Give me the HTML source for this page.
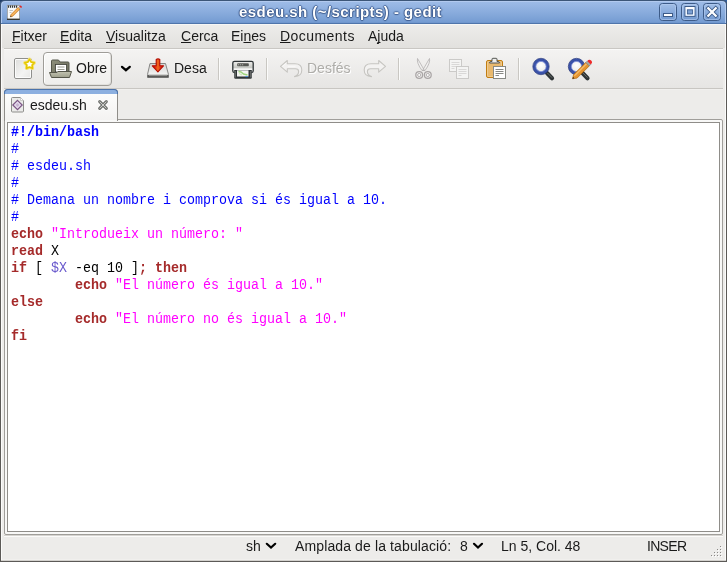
<!DOCTYPE html>
<html><head><meta charset="utf-8">
<style>
*{box-sizing:border-box;margin:0;padding:0}
html,body{width:727px;height:562px;overflow:hidden;background:#edecea}
body{position:relative;font-family:"Liberation Sans",sans-serif;font-size:14px;color:#000}
.abs{position:absolute}
.mi,.tb,.sb,#ttext,#code,.tl{will-change:transform}
#ttext{left:239px;top:3px;white-space:nowrap;color:#fff;font-weight:bold;font-size:15px;
 text-shadow:1px 0 1px rgba(45,75,125,0.75),-1px 0 1px rgba(45,75,125,0.75),0 1px 1px rgba(45,75,125,0.75),0 -1px 1px rgba(45,75,125,0.6);letter-spacing:0.45px}
.mi{top:28px;font-size:14px;color:#1a1a1a}
.mi u{text-decoration:underline;text-underline-offset:1px;text-decoration-thickness:1px;text-decoration-skip-ink:none}
.tb{position:absolute;top:60px;font-size:14px;color:#1a1a1a}
.sep{position:absolute;top:58px;width:2px;height:22px;border-left:1px solid #c9c7c2;border-right:1px solid #fbfbfa}
#code{left:11px;top:124px;font-family:"Liberation Mono",monospace;font-size:13.33px;line-height:15.0px;white-space:pre;color:#000;transform:scaleY(1.1333);transform-origin:0 0}
.cm{color:#0000ff}.kw{color:#a52a2a;font-weight:bold}.st{color:#ff00ff}.vr{color:#6a5acd}
.sb{position:absolute;top:538px;font-size:14px;color:#1a1a1a}
</style></head><body>
<div class="abs" style="left:0;top:24px;width:727px;height:538px;background:#5c5a57"></div>
<div class="abs" style="left:1px;top:24px;width:725px;height:537px;background:#fbfbfa"></div>
<div class="abs" style="left:2px;top:24px;width:723px;height:537px;background:#edecea"></div>
<div class="abs" style="left:2px;top:559px;width:723px;height:1px;background:#f1f0ee"></div>
<div class="abs" style="left:1px;top:560px;width:725px;height:1px;background:#d3d1cd"></div>
<svg class="abs" style="left:0;top:0" width="727" height="24" viewBox="0 0 727 24">
<defs><linearGradient id="gTitle" x1="0" y1="0" x2="0" y2="1"><stop offset="0" stop-color="#9dbbe7"/><stop offset="0.5" stop-color="#88abdc"/><stop offset="1" stop-color="#7199d0"/></linearGradient>
<linearGradient id="gBtn" x1="0" y1="0" x2="0" y2="1"><stop offset="0" stop-color="#a2bfe8"/><stop offset="1" stop-color="#7299d0"/></linearGradient></defs>
<rect x="0" y="0" width="8" height="8" fill="#1f3d6a"/>
<rect x="719" y="0" width="8" height="8" fill="#2f5e9e"/>
<path d="M0 24 V4.5 Q0 0 4.5 0 H722.5 Q727 0 727 4.5 V24 Z" fill="#3c5678"/>
<path d="M1 24 V5 Q1 1 5 1 H722 Q726 1 726 5 V24 Z" fill="#b2caef"/>
<path d="M2 24 V5.5 Q2 2 5.5 2 H721.5 Q725 2 725 5.5 V24 Z" fill="url(#gTitle)"/>
<rect x="0" y="23" width="727" height="1" fill="#4f75ab"/>
<rect x="2" y="22" width="723" height="1" fill="#7097ce"/>
<rect x="0" y="2" width="1" height="22" fill="#3c5678"/>
<rect x="726" y="2" width="1" height="22" fill="#3c5678"/>
<g>
<rect x="659.5" y="3.5" width="17" height="17" rx="3" fill="url(#gBtn)" stroke="#3d5b88"/>
<rect x="660.5" y="4.5" width="15" height="15" rx="2" fill="none" stroke="#b5cdf0" stroke-opacity="0.6"/>
<rect x="663.5" y="13.5" width="9" height="3" fill="#fff" stroke="#3d5b88" stroke-width="1"/>
<rect x="681.5" y="3.5" width="17" height="17" rx="3" fill="url(#gBtn)" stroke="#3d5b88"/>
<rect x="682.5" y="4.5" width="15" height="15" rx="2" fill="none" stroke="#b5cdf0" stroke-opacity="0.6"/>
<rect x="685" y="6.5" width="10" height="9.8" fill="none" stroke="#3d5b88" stroke-width="1"/>
<rect x="686.2" y="7.7" width="7.6" height="7.4" fill="#7a9fd3" stroke="#fff" stroke-width="1.3"/>
<rect x="685.8" y="7.3" width="8.4" height="2" fill="#fff"/>
<rect x="687.5" y="9.9" width="5" height="4" fill="none" stroke="#3d5b88" stroke-width="0.7"/>
<rect x="703.5" y="3.5" width="17" height="17" rx="3" fill="url(#gBtn)" stroke="#3d5b88"/>
<rect x="704.5" y="4.5" width="15" height="15" rx="2" fill="none" stroke="#b5cdf0" stroke-opacity="0.6"/>
<path d="M708.3 8.3 L715.7 15.7 M715.7 8.3 L708.3 15.7" stroke="#3d5b88" stroke-width="4" stroke-linecap="square"/>
<path d="M708.3 8.3 L715.7 15.7 M715.7 8.3 L708.3 15.7" stroke="#fff" stroke-width="2.3" stroke-linecap="square"/>
</g>
<!-- app icon -->
<rect x="7.3" y="5.3" width="12.2" height="14.2" fill="#fafaf8" stroke="#8f8f8a" stroke-width="0.7"/>
<rect x="7" y="18.6" width="12.8" height="1.4" fill="#35352f"/>
<path d="M8 6.6 h10" stroke="#2e3436" stroke-width="2.4" stroke-dasharray="1.2 0.8"/>
<path d="M9.5 10.5 h3.5 M9.5 12.5 h2" stroke="#aaa" stroke-width="0.7"/>
<path d="M10.3 17 L11 14.5 L18.2 7.3 L20 9.1 L12.8 16.3 Z" fill="#f0a040" stroke="#b86a10" stroke-width="0.5" stroke-linejoin="round"/>
<path d="M11.8 15.5 L18.9 8.4" stroke="#fbd38a" stroke-width="0.7"/>
<path d="M10.3 17 L10.7 15.6 L11.7 16.6 Z" fill="#222"/>
<path d="M18.2 7.3 L19.2 6.3 L21 8.1 L20 9.1 Z" fill="#b8b8b4"/>
<path d="M19.2 6.3 Q20.3 5 21.6 6.2 Q22.6 7.3 21 8.1 Z" fill="#e02424"/>
</svg>
<div class="abs" id="ttext">esdeu.sh (~/scripts) - gedit</div>

<div class="abs" style="left:2px;top:24px;width:723px;height:1px;background:#f6f6f5"></div>
<div class="abs" style="left:2px;top:25px;width:723px;height:23px;background:linear-gradient(#edecea,#e2e1de)"></div>
<div class="abs" style="left:4px;top:48px;width:719px;height:1px;background:#c9c7c3"></div>
<div class="abs mi" style="left:12px"><u>F</u>itxer</div>
<div class="abs mi" style="left:60px"><u>E</u>dita</div>
<div class="abs mi" style="left:106px"><u>V</u>isualitza</div>
<div class="abs mi" style="left:181px"><u>C</u>erca</div>
<div class="abs mi" style="left:231px">Ei<u>n</u>es</div>
<div class="abs mi" style="left:280px;letter-spacing:0.45px"><u>D</u>ocuments</div>
<div class="abs mi" style="left:368px">A<u>j</u>uda</div>

<div class="abs" style="left:4px;top:49px;width:719px;height:39px;background:linear-gradient(#f4f3f2,#e6e5e3)"></div>
<div class="abs" style="left:4px;top:49px;width:719px;height:1px;background:#fafaf9"></div>
<div class="abs" style="left:4px;top:88px;width:719px;height:1px;background:#c8c6c2"></div>
<div class="abs" style="left:4px;top:89px;width:719px;height:1px;background:#f1f0ee"></div>
<div class="abs" style="left:43px;top:52px;width:69px;height:34px;border:1px solid #9f9d98;border-radius:4px;background:linear-gradient(#f9f9f8,#efeeec);box-shadow:inset 1px 1px 0 #fff,inset -1px -1px 0 #e2e1de"></div>
<div class="tb" style="left:76px">Obre</div>
<div class="tb" style="left:174px">Desa</div>
<div class="tb" style="left:307px;color:#aeada9;text-shadow:1px 1px 0 #fff">Desfés</div>
<div class="sep" style="left:218px"></div>
<div class="sep" style="left:266px"></div>
<div class="sep" style="left:398px"></div>
<div class="sep" style="left:518px"></div>

<!-- notebook / tab -->
<div class="abs" style="left:4px;top:119px;width:719px;height:416px;border:1px solid #a09e9a;border-radius:2px;background:#f8f8f7"></div>
<div class="abs" style="left:7px;top:122px;width:713px;height:410px;border:1px solid #8f8d89;background:#fff"></div>
<div class="abs" style="left:4px;top:89px;width:114px;height:32px;border:1px solid #8f8d89;border-bottom:none;border-radius:4px 4px 0 0;background:linear-gradient(#fdfdfc 10%,#f3f2f1)"></div>
<div class="abs" style="left:5px;top:120px;width:112px;height:2px;background:#f8f8f7"></div>
<div class="abs" style="left:4px;top:89px;width:114px;height:5px;border:1px solid #4a72ab;border-bottom:none;border-radius:4px 4px 0 0;background:#8db0e0"></div>
<div class="abs tl" style="left:30px;top:97px;font-size:14px;color:#1a1a1a">esdeu.sh</div>
<div class="abs" style="left:4px;top:535px;width:719px;height:1px;background:#d6d4d0"></div>
<div class="abs" style="left:4px;top:536px;width:719px;height:1px;background:#fbfbfa"></div>

<div class="abs" id="code"><span class="cm" style="font-weight:bold">#!/bin/bash</span>
<span class="cm">#</span>
<span class="cm"># esdeu.sh</span>
<span class="cm">#</span>
<span class="cm"># Demana un nombre i comprova si és igual a 10.</span>
<span class="cm">#</span>
<span class="kw">echo</span> <span class="st">"Introdueix un número: "</span>
<span class="kw">read</span> X
<span class="kw">if</span> [ <span class="vr">$X</span> -eq 10 ]<span class="kw">;</span> <span class="kw">then</span>
        <span class="kw">echo</span> <span class="st">"El número és igual a 10."</span>
<span class="kw">else</span>
        <span class="kw">echo</span> <span class="st">"El número no és igual a 10."</span>
<span class="kw">fi</span></div>

<div class="sb" style="left:246px">sh</div>
<div class="sb" style="left:295px;letter-spacing:0.12px">Amplada de la tabulació:</div>
<div class="sb" style="left:460px">8</div>
<div class="sb" style="left:501px">Ln 5, Col. 48</div>
<div class="sb" style="left:647px;letter-spacing:-0.7px">INSER</div>
<svg class="abs" style="left:0;top:0" width="727" height="562" viewBox="0 0 727 562">
<defs>
<linearGradient id="gPage" x1="0" y1="0" x2="1" y2="1"><stop offset="0" stop-color="#dcdcda"/><stop offset="0.6" stop-color="#f4f4f3"/><stop offset="1" stop-color="#e6e6e4"/></linearGradient>
<radialGradient id="gLens" cx="0.5" cy="0.4" r="0.6"><stop offset="0" stop-color="#ffffff"/><stop offset="0.7" stop-color="#eeeeec"/><stop offset="1" stop-color="#c4c6c2"/></radialGradient>
<linearGradient id="gRed" x1="0" y1="0" x2="1" y2="0"><stop offset="0.2" stop-color="#d91a0a"/><stop offset="0.5" stop-color="#f26a1e"/><stop offset="0.8" stop-color="#d91a0a"/></linearGradient>
<linearGradient id="gPencil" x1="0" y1="0" x2="1" y2="1"><stop offset="0" stop-color="#f7b75a"/><stop offset="1" stop-color="#d8780a"/></linearGradient>
</defs>
<!-- new document -->
<rect x="14.5" y="58.5" width="17" height="20" rx="1.5" fill="url(#gPage)" stroke="#8f8f8d"/>
<rect x="15.5" y="59.5" width="15" height="18" rx="0.5" fill="none" stroke="#fff" stroke-width="0.8"/>
<path d="M29.50 59.30 L31.09 62.12 L34.26 62.75 L32.07 65.13 L32.44 68.35 L29.50 67.00 L26.56 68.35 L26.93 65.13 L24.74 62.75 L27.91 62.12 Z" fill="#fff" stroke="#f5e27a" stroke-width="3.4" stroke-linejoin="round"/>
<path d="M29.50 59.30 L31.09 62.12 L34.26 62.75 L32.07 65.13 L32.44 68.35 L29.50 67.00 L26.56 68.35 L26.93 65.13 L24.74 62.75 L27.91 62.12 Z" fill="#fff" stroke="#e5c800" stroke-width="1.6" stroke-linejoin="round"/>
<!-- open folder -->
<defs><linearGradient id="gFb" x1="0" y1="0" x2="1" y2="1"><stop offset="0" stop-color="#8f907c"/><stop offset="1" stop-color="#6a6b5a"/></linearGradient><linearGradient id="gFf" x1="0" y1="0" x2="0" y2="1"><stop offset="0" stop-color="#c2c3b1"/><stop offset="1" stop-color="#9fa08c"/></linearGradient></defs><path d="M51.5 61 Q51.5 60 52.5 60 L58.5 60 L60 62 L68 62 Q69 62 69 63 L69 73 L51.5 73 Z" fill="url(#gFb)" stroke="#55564a"/>
<rect x="55.5" y="64.5" width="11" height="7.5" fill="#fff" stroke="#3c3d35" stroke-width="0.8"/>
<path d="M57.5 67 H64.5 M57.5 69.5 H64.5" stroke="#9c9d93" stroke-width="1"/>
<path d="M49.5 72.5 L57 72.5 L58 71.5 L71.5 71.5 L69.5 77.5 L51.5 77.5 Z" fill="url(#gFf)" stroke="#55564a" stroke-linejoin="round"/>
<!-- save -->
<defs><linearGradient id="gDrv" x1="0" y1="0" x2="0" y2="1"><stop offset="0" stop-color="#d4d4d2"/><stop offset="1" stop-color="#fbfbfa"/></linearGradient><linearGradient id="gDrvB" x1="0" y1="0" x2="0" y2="1"><stop offset="0" stop-color="#9a9a98"/><stop offset="0.4" stop-color="#4a4a48"/><stop offset="1" stop-color="#6e6e6c"/></linearGradient></defs>
<path d="M150 63.5 L165.5 63.5 L168.5 74.5 L168.5 77.5 L147.5 77.5 L147.5 74.5 Z" fill="url(#gDrv)" stroke="#858583" stroke-linejoin="round"/>
<rect x="147.6" y="74.6" width="20.8" height="3.1" fill="url(#gDrvB)"/>
<path d="M149 75.6 H167" stroke="#b8b8b6" stroke-width="0.6"/>
<path d="M156.2 59.5 Q158 58.3 159.8 59.5 L159.8 65.8 L163.5 65.8 L157.9 71.8 L152.3 65.8 L156.2 65.8 Z" fill="url(#gRed)" stroke="#b40c00" stroke-width="1.1" stroke-linejoin="round"/>
<!-- print -->
<defs><linearGradient id="gPrn" x1="0" y1="0" x2="0" y2="1"><stop offset="0" stop-color="#f0f0ee"/><stop offset="0.55" stop-color="#c8cac5"/><stop offset="0.7" stop-color="#fafafa"/><stop offset="1" stop-color="#d0d2cd"/></linearGradient></defs>
<path d="M234.5 61.3 H251.5 Q253.2 61.3 253.2 63 V71 Q253.2 72.5 251.5 72.5 H234.5 Q232.8 72.5 232.8 71 V63 Q232.8 61.3 234.5 61.3 Z" fill="url(#gPrn)" stroke="#2e3436" stroke-width="1.3"/>
<rect x="237.2" y="63.2" width="11.6" height="3" rx="0.8" fill="#555753"/>
<circle cx="238.7" cy="64.7" r="0.55" fill="#d3d7cf"/><circle cx="240.7" cy="64.7" r="0.55" fill="#d3d7cf"/><circle cx="242.7" cy="64.7" r="0.55" fill="#d3d7cf"/>
<path d="M234.2 70 H251.8 V77.5 Q251.8 78.8 250.5 78.8 H235.5 Q234.2 78.8 234.2 77.5 Z" fill="#2e3436"/>
<path d="M235.2 71 V77.5 M250.8 71 V77.5" stroke="#8a8d88" stroke-width="0.8"/>
<rect x="237" y="70.3" width="11.5" height="6.2" fill="#f4f4f2"/>
<path d="M238.5 71.5 L241 72 L243.5 74 L247.5 75" stroke="#9fd67e" stroke-width="1.4" fill="none"/>
<path d="M239 73.5 L242 75" stroke="#c5e8b0" stroke-width="1" fill="none"/>
<rect x="245.5" y="76" width="2.2" height="1.1" fill="#4c94e0"/>
<!-- undo (disabled) -->
<path d="M280.5 66.3 L287.3 60.5 L287.3 63.8 L295 63.8 Q301.8 63.8 301.8 70 Q301.8 76.3 294.5 76.6 Q298.6 75.2 298.6 71.5 Q298.6 68.8 295.5 68.8 L287.3 68.8 L287.3 72.2 Z" fill="#f3f2f1" stroke="#c6c5c1" stroke-width="1.1" stroke-linejoin="round"/>
<path d="M282.5 66.3 L286.3 63 M288 66.3 H295.5" stroke="#fbfbfa" stroke-width="0.8"/>
<!-- redo (disabled) -->
<path d="M385.5 66.3 L378.7 60.5 L378.7 63.8 L371 63.8 Q364.2 63.8 364.2 70 Q364.2 76.3 371.5 76.6 Q367.4 75.2 367.4 71.5 Q367.4 68.8 370.5 68.8 L378.7 68.8 L378.7 72.2 Z" fill="#f3f2f1" stroke="#c6c5c1" stroke-width="1.1" stroke-linejoin="round"/>
<!-- cut (disabled) -->
<path d="M417.5 58.5 Q416.5 63 422 70.5 L424.5 70.5 Z M429.5 58.5 Q430.5 63 425 70.5 L422.5 70.5 Z" fill="#f1f0ef" stroke="#b3b0b0" stroke-width="0.8" stroke-linejoin="round"/>
<circle cx="419.2" cy="75" r="3.4" fill="#f1f0ef" stroke="#aaa6a6" stroke-width="1.3"/><circle cx="419.2" cy="75" r="1.6" fill="#f7f7f6" stroke="#b5b1b1" stroke-width="1"/>
<circle cx="427.8" cy="75" r="3.4" fill="#f1f0ef" stroke="#aaa6a6" stroke-width="1.3"/><circle cx="427.8" cy="75" r="1.6" fill="#f7f7f6" stroke="#b5b1b1" stroke-width="1"/>
<!-- copy (disabled) -->
<rect x="449.5" y="59.5" width="12" height="12" fill="#f4f4f3" stroke="#cbcac8"/>
<path d="M451.5 62.5 H459.5 M451.5 64.5 H459.5 M451.5 66.5 H459.5 M451.5 68.5 H454.5" stroke="#d2d1cf" stroke-width="0.8"/>
<rect x="456.5" y="66.5" width="12" height="12" fill="#f4f4f3" stroke="#cbcac8"/>
<path d="M458.5 69.5 H466.5 M458.5 71.5 H466.5 M458.5 73.5 H466.5 M458.5 75.5 H461.5" stroke="#d2d1cf" stroke-width="0.8"/>
<!-- paste -->
<rect x="486.5" y="60.5" width="16" height="17" rx="1.5" fill="#e9b96e" stroke="#c17d11"/>
<rect x="487.5" y="61.5" width="14" height="15" rx="1" fill="none" stroke="#f3d29c" stroke-width="0.7"/>
<path d="M489.5 63 Q489.5 61.5 491 61.5 L492 61.5 L492 59 Q492 58.3 493 58.3 L496 58.3 Q497 58.3 497 59 L497 61.5 L498 61.5 Q499.5 61.5 499.5 63 Z" fill="#eeeeec" stroke="#555753" stroke-width="1"/>
<rect x="493.5" y="66.5" width="12" height="12" fill="#fff" stroke="#888a85"/>
<path d="M495.5 69.5 H503.5 M495.5 71.5 H503.5 M495.5 73.5 H503.5 M495.5 75.5 H499" stroke="#7a7c77" stroke-width="0.9"/>
<!-- find -->
<path d="M547 73 L552 78.2" stroke="#2e3436" stroke-width="4.2" stroke-linecap="round"/>
<path d="M547.6 73.2 L551.8 77.4" stroke="#6d716c" stroke-width="1" stroke-linecap="round"/>
<circle cx="541" cy="66.5" r="6.6" fill="url(#gLens)" stroke="#3a52a8" stroke-width="3"/>
<circle cx="541" cy="66.5" r="5.1" fill="none" stroke="#8796dc" stroke-width="0.8"/>
<circle cx="541" cy="66.5" r="8.2" fill="none" stroke="#23337a" stroke-width="0.7"/>
<!-- find replace -->
<path d="M582.5 73 L587.5 78.2" stroke="#2e3436" stroke-width="4.2" stroke-linecap="round"/>
<path d="M583.1 73.2 L587.3 77.4" stroke="#6d716c" stroke-width="1" stroke-linecap="round"/>
<circle cx="576.5" cy="66.5" r="6.6" fill="url(#gLens)" stroke="#3a52a8" stroke-width="3"/>
<circle cx="576.5" cy="66.5" r="5.1" fill="none" stroke="#8796dc" stroke-width="0.8"/>
<circle cx="576.5" cy="66.5" r="8.2" fill="none" stroke="#23337a" stroke-width="0.7"/>
<path d="M572.5 78.8 L573.6 74.6 L585.8 62.4 L589.3 65.9 L577.1 78.1 Z" fill="url(#gPencil)" stroke="#a65a00" stroke-width="0.6" stroke-linejoin="round"/>
<path d="M574.6 75.8 L586.6 63.8" stroke="#fcd79a" stroke-width="0.9"/>
<path d="M572.5 78.8 L573 76.9 L574.4 78.3 Z" fill="#1a1a1a"/>
<path d="M585.8 62.4 L587.3 60.9 L590.8 64.4 L589.3 65.9 Z" fill="#a8aaa5" stroke="#666" stroke-width="0.4"/>
<path d="M587.3 60.9 Q589.3 58.6 591.2 60.6 Q593.1 62.5 590.8 64.4 Z" fill="#ef2929"/>
<!-- tab icon -->
<path d="M12.5 97.5 H20.5 L23.5 100.5 V111 Q23.5 112 22.5 112 H12.5 Q11.5 112 11.5 111 V98.5 Q11.5 97.5 12.5 97.5 Z" fill="#ebebe9" stroke="#8d8d8a"/>
<path d="M20.5 97.5 V100.5 H23.5" fill="#fff" stroke="#b5b5b2" stroke-width="0.6"/>
<path d="M17.5 100.3 L22.2 105 L17.5 109.7 L12.8 105 Z" fill="#e6dcee" stroke="#7b5584" stroke-width="1.2"/>
<path d="M17.5 103 L19.5 105 L17.5 107 L15.5 105 Z" fill="#c8b4d2"/>
<!-- tab close -->
<path d="M99.7 101.7 L106.3 108.3 M106.3 101.7 L99.7 108.3" stroke="#ffffff" stroke-opacity="0.7" stroke-width="4.6" stroke-linecap="round"/>
<path d="M99.7 101.7 L106.3 108.3 M106.3 101.7 L99.7 108.3" stroke="#737571" stroke-width="3.2" stroke-linecap="round"/>
<path d="M99.9 101.9 L106.1 108.1 M106.1 101.9 L99.9 108.1" stroke="#c9cac7" stroke-width="1" stroke-linecap="round"/>
<!-- status chevrons -->
<path d="M266.8 543.8 L271 547.6 L275.2 543.8" stroke="#000" stroke-width="2.2" fill="none" stroke-linecap="round"/>
<path d="M474 543.8 L478 547.6 L482 543.8" stroke="#000" stroke-width="2.2" fill="none" stroke-linecap="round"/>
<!-- toolbar chevron -->
<path d="M122 66.8 L125.9 70.2 L129.8 66.8" stroke="#000" stroke-width="2.2" fill="none" stroke-linecap="round"/>
<!-- grip -->
<rect x="721" y="547" width="1" height="1" fill="#fff"/><rect x="720" y="546" width="1" height="1" fill="#8a8886"/><rect x="718" y="550" width="1" height="1" fill="#fff"/><rect x="717" y="549" width="1" height="1" fill="#8a8886"/><rect x="721" y="550" width="1" height="1" fill="#fff"/><rect x="720" y="549" width="1" height="1" fill="#8a8886"/><rect x="715" y="553" width="1" height="1" fill="#fff"/><rect x="714" y="552" width="1" height="1" fill="#8a8886"/><rect x="718" y="553" width="1" height="1" fill="#fff"/><rect x="717" y="552" width="1" height="1" fill="#8a8886"/><rect x="721" y="553" width="1" height="1" fill="#fff"/><rect x="720" y="552" width="1" height="1" fill="#8a8886"/><rect x="712" y="556" width="1" height="1" fill="#fff"/><rect x="711" y="555" width="1" height="1" fill="#8a8886"/><rect x="715" y="556" width="1" height="1" fill="#fff"/><rect x="714" y="555" width="1" height="1" fill="#8a8886"/><rect x="718" y="556" width="1" height="1" fill="#fff"/><rect x="717" y="555" width="1" height="1" fill="#8a8886"/><rect x="721" y="556" width="1" height="1" fill="#fff"/><rect x="720" y="555" width="1" height="1" fill="#8a8886"/>
</svg>
</body></html>
